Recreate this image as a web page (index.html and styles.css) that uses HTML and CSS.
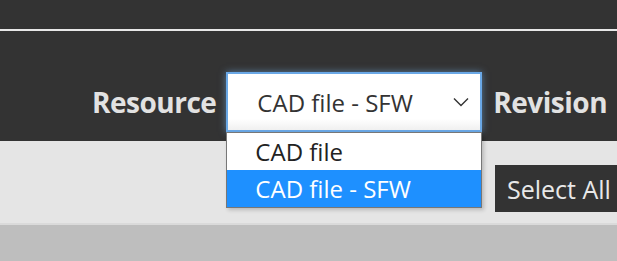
FILE: index.html
```html
<!DOCTYPE html>
<html lang="en">
<head>
    <meta charset="UTF-8">
    <meta name="viewport" content="width=device-width, initial-scale=1.0">
    <title>Resources</title>
    <link rel="stylesheet" href="styles.css">
</head>
<body>
    <!-- Top bar -->
    <div class="topbar"></div>

    <!-- Filter toolbar -->
    <div class="toolbar">
        <label class="field-label">Resource</label>
        <div class="select-wrap">
            <div class="select">
                <span>CAD file - SFW</span>
                <svg class="chevron" width="16" height="10" viewBox="0 0 16 10">
                    <path d="M1 1.5 L8 8.5 L15 1.5" fill="none" stroke="#333" stroke-width="1.4"/>
                </svg>
            </div>
            <ul class="options">
                <li>CAD file</li>
                <li class="active">CAD file - SFW</li>
            </ul>
        </div>
        <label class="field-label">Revision</label>
    </div>

    <!-- Actions -->
    <div class="actions">
        <button class="select-all">Select All</button>
    </div>

    <div class="footer"></div>
</body>
</html>
```
FILE: styles.css
```css
body {
    margin: 0;
    padding: 0;
    font-family: "Open Sans", "Noto Sans", sans-serif;
    background-color: #bebebe;
    overflow: hidden;
}
.topbar {
    height: 29px;
    background: #333;
    border-bottom: 2px solid #e8e8e8;
}
.toolbar {
    display: flex;
    align-items: center;
    height: 110px;
    box-sizing: border-box;
    padding: 32px 0 0 92px;
    background: #333;
    white-space: nowrap;
}
.field-label {
    color: #e2e2e2;
    font-weight: bold;
    font-size: 28px;
    letter-spacing: -0.5px;
}
.select-wrap {
    position: relative;
    margin: 0 11px 0 10px;
}
.select {
    display: flex;
    align-items: center;
    justify-content: space-between;
    box-sizing: border-box;
    width: 256px;
    height: 60px;
    padding: 0 11px 0 29px;
    background: linear-gradient(#fff 80%, #f0f0f0);
    border: 2px solid #6aa8e6;
    box-shadow: 0 0 7px rgba(120, 180, 240, 0.55);
    color: #333;
    font-size: 24px;
}
.options {
    position: absolute;
    top: 60px;
    left: 0;
    width: 256px;
    box-sizing: border-box;
    margin: 0;
    padding: 0;
    list-style: none;
    background: #fff;
    border: 1px solid #777;
    box-shadow: 2px 2px 4px rgba(0, 0, 0, 0.2);
    font-size: 24px;
    color: #222;
}
.options li {
    height: 37px;
    line-height: 37px;
    padding-left: 28px;
}
.options li.active {
    background: #1e90ff;
    color: #fff;
}
.actions {
    display: flex;
    justify-content: flex-end;
    height: 84px;
    padding-top: 24px;
    box-sizing: border-box;
    background: #e5e5e5;
    border-bottom: 2px solid #dadada;
}
.select-all {
    height: 47px;
    width: 130px;
    margin-right: -8px;
    padding: 0 0 0 12px;
    text-align: left;
    background: #333;
    color: #e8e8e8;
    border: none;
    font-family: inherit;
    font-size: 25px;
}
.footer {
    height: 40px;
}
```
